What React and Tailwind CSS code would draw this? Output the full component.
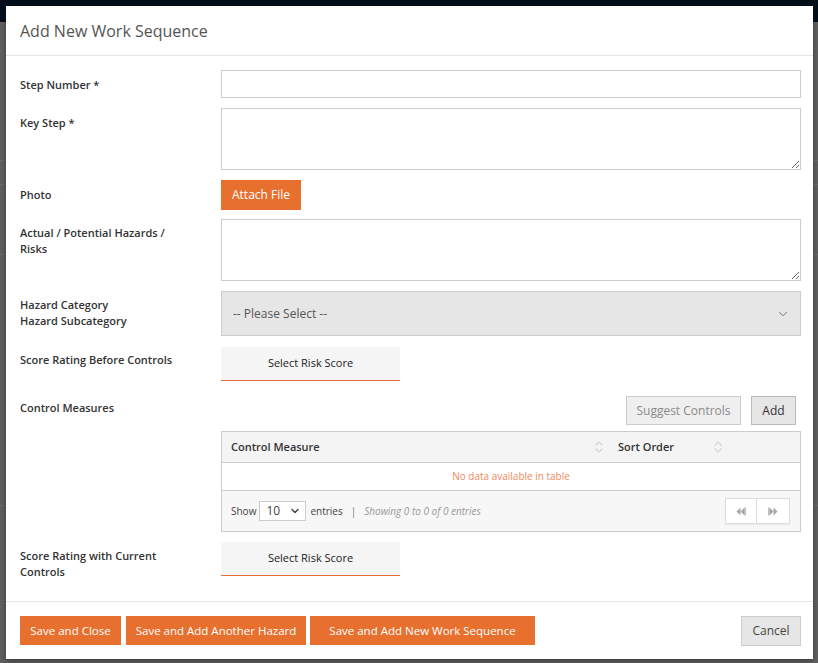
import { ChevronDown } from 'lucide-react'

function SortIcon() {
  return (
    <svg width="10" height="14" viewBox="0 0 10 14" fill="none" stroke="#d4d4d4" strokeWidth="1.2">
      <path d="M1.5 5.5 5 2l3.5 3.5" />
      <path d="M1.5 8.5 5 12l3.5-3.5" />
    </svg>
  )
}

function RiskButton() {
  return (
    <button className="h-[34px] w-[179px] border-b border-[#e8702f] bg-[#f5f5f5] text-[11px] text-[#222]">
      Select Risk Score
    </button>
  )
}

function Label({ children, className = '' }) {
  return (
    <div className={`w-[201px] shrink-0 pr-[28px] text-[11px] font-semibold leading-4 text-[#333] ${className}`}>
      {children}
    </div>
  )
}

function PagerIcon({ flip }) {
  return (
    <svg width="10" height="9" viewBox="0 0 10 9" fill="#a8a8a8" style={flip ? { transform: 'scaleX(-1)' } : undefined}>
      <path d="M4.5 0.5v8L0.5 4.5z" />
      <path d="M8.5 0.5v8L4.5 4.5z" />
      <rect x="8.5" y="0.5" width="1.2" height="8" />
    </svg>
  )
}

export default function App() {
  return (
    <div className="relative h-[663px] w-[818px] overflow-hidden bg-[#606060] font-['Open_Sans',sans-serif]">
      {/* page behind the overlay */}
      <div className="absolute inset-x-0 top-0 h-[22px] bg-[#020f1b]" />
      <div className="absolute inset-x-0 top-[160px] h-px bg-[#6c6c6c]" />
      <div className="absolute inset-x-0 top-[184px] h-px bg-[#6c6c6c]" />
      <div className="absolute inset-x-0 top-[254px] h-px bg-[#6c6c6c]" />
      <div className="absolute inset-x-0 top-[505px] h-px bg-[#6c6c6c]" />

      <div className="relative ml-[6px] mt-[6px] flex h-[653px] w-[807px] flex-col bg-white shadow-[0_2px_6px_rgba(0,0,0,0.4)]">
        <div className="flex h-[50px] shrink-0 items-center border-b border-[#e5e5e5] px-[14px]">
          <h1 className="text-[16px] font-normal text-[#555]">Add New Work Sequence</h1>
        </div>

        <div className="flex-1 pl-[14px] pr-[12px] pt-[14px]">
          <div className="flex">
            <Label className="pt-[7px]">Step Number *</Label>
            <input className="h-[28px] flex-1 border border-[#ccc] px-2 text-xs outline-none" />
          </div>

          <div className="mt-[10px] flex">
            <Label className="pt-[7px]">Key Step *</Label>
            <textarea className="block h-[62px] flex-1 border border-[#ccc] px-2 text-xs outline-none" />
          </div>

          <div className="mt-[10px] flex">
            <Label className="pt-[7px]">Photo</Label>
            <button className="h-[30px] w-[80px] bg-[#e8702f] text-xs text-white">Attach File</button>
          </div>

          <div className="mt-[9px] flex">
            <Label className="pt-[6px]">Actual / Potential Hazards / Risks</Label>
            <textarea className="block h-[62px] flex-1 border border-[#ccc] px-2 text-xs outline-none" />
          </div>

          <div className="mt-[10px] flex">
            <Label className="pt-[6px]">
              Hazard Category
              <br />
              Hazard Subcategory
            </Label>
            <div className="flex h-[45px] flex-1 items-center justify-between border border-[#ccc] bg-[#e6e6e6] pl-[11px] pr-[10px] text-xs text-[#555]">
              <span>-- Please Select --</span>
              <ChevronDown size={14} strokeWidth={1.5} color="#666" />
            </div>
          </div>

          <div className="mt-[11px] flex">
            <Label className="pt-[5px]">Score Rating Before Controls</Label>
            <RiskButton />
          </div>

          <div className="mt-[10px] flex">
            <Label className="pt-[9px]">Control Measures</Label>
            <div className="flex-1">
              <div className="flex justify-end gap-[10px] pr-[5px] pt-[5px]">
                <button className="h-[29px] w-[115px] border border-[#ccc] bg-[#efefef] text-xs text-[#8a8a8a]">
                  Suggest Controls
                </button>
                <button className="h-[29px] w-[45px] border border-[#bbb] bg-[#e6e6e6] text-xs text-[#333]">
                  Add
                </button>
              </div>
              <div className="mt-[6px] border border-[#ccc]">
                <div className="flex h-[31px] items-center border-b border-[#ccc] bg-[#f4f4f4] text-[11px] font-semibold text-[#333]">
                  <div className="flex w-[386px] items-center justify-between pl-[9px] pr-[4px]">
                    <span>Control Measure</span>
                    <SortIcon />
                  </div>
                  <div className="flex w-[120px] items-center justify-between pl-[10px] pr-[5px]">
                    <span>Sort Order</span>
                    <SortIcon />
                  </div>
                </div>
                <div className="flex h-[28px] items-center justify-center border-b border-[#ccc] text-[10px] text-[#f08a5a]">
                  No data available in table
                </div>
                <div className="flex h-[40px] items-center justify-between bg-[#f7f7f7] pl-[9px] pr-[10px] text-[10px] text-[#444]">
                  <div className="flex items-center">
                    <span>Show</span>
                    <div className="ml-[3px] flex h-[20px] w-[47px] items-center justify-between border border-[#ccc] bg-white pl-[6px] pr-[4px] text-xs text-[#444]">
                      <span>10</span>
                      <ChevronDown size={12} strokeWidth={3} color="#444" />
                    </div>
                    <span className="ml-[4px]">entries</span>
                    <span className="ml-[8px] text-[#777]">|</span>
                    <span className="ml-[8px] text-[10px] italic text-[#999]">Showing 0 to 0 of 0 entries</span>
                  </div>
                  <div className="flex h-[26px] border border-[#ddd] bg-white shadow-[0_1px_1px_rgba(0,0,0,0.05)]">
                    <div className="flex w-[31px] items-center justify-center border-r border-[#ddd]">
                      <PagerIcon />
                    </div>
                    <div className="flex w-[32px] items-center justify-center">
                      <PagerIcon flip />
                    </div>
                  </div>
                </div>
              </div>
            </div>
          </div>

          <div className="mt-[10px] flex">
            <Label className="pt-[6px]">Score Rating with Current Controls</Label>
            <RiskButton />
          </div>
        </div>

        <div className="flex h-[58px] shrink-0 items-center justify-between border-t border-[#e5e5e5] pl-[14px] pr-[12px]">
          <div className="flex">
            <button className="h-[29px] w-[101px] bg-[#e8702f] text-[11.5px] text-white">Save and Close</button>
            <button className="ml-[5px] h-[29px] w-[180px] bg-[#e8702f] text-[11.5px] text-white">Save and Add Another Hazard</button>
            <button className="ml-[4px] h-[29px] w-[225px] bg-[#e8702f] text-[11.5px] text-white">Save and Add New Work Sequence</button>
          </div>
          <button className="h-[30px] w-[60px] border border-[#ccc] bg-[#e6e6e6] text-xs text-[#444]">Cancel</button>
        </div>
      </div>
    </div>
  )
}
